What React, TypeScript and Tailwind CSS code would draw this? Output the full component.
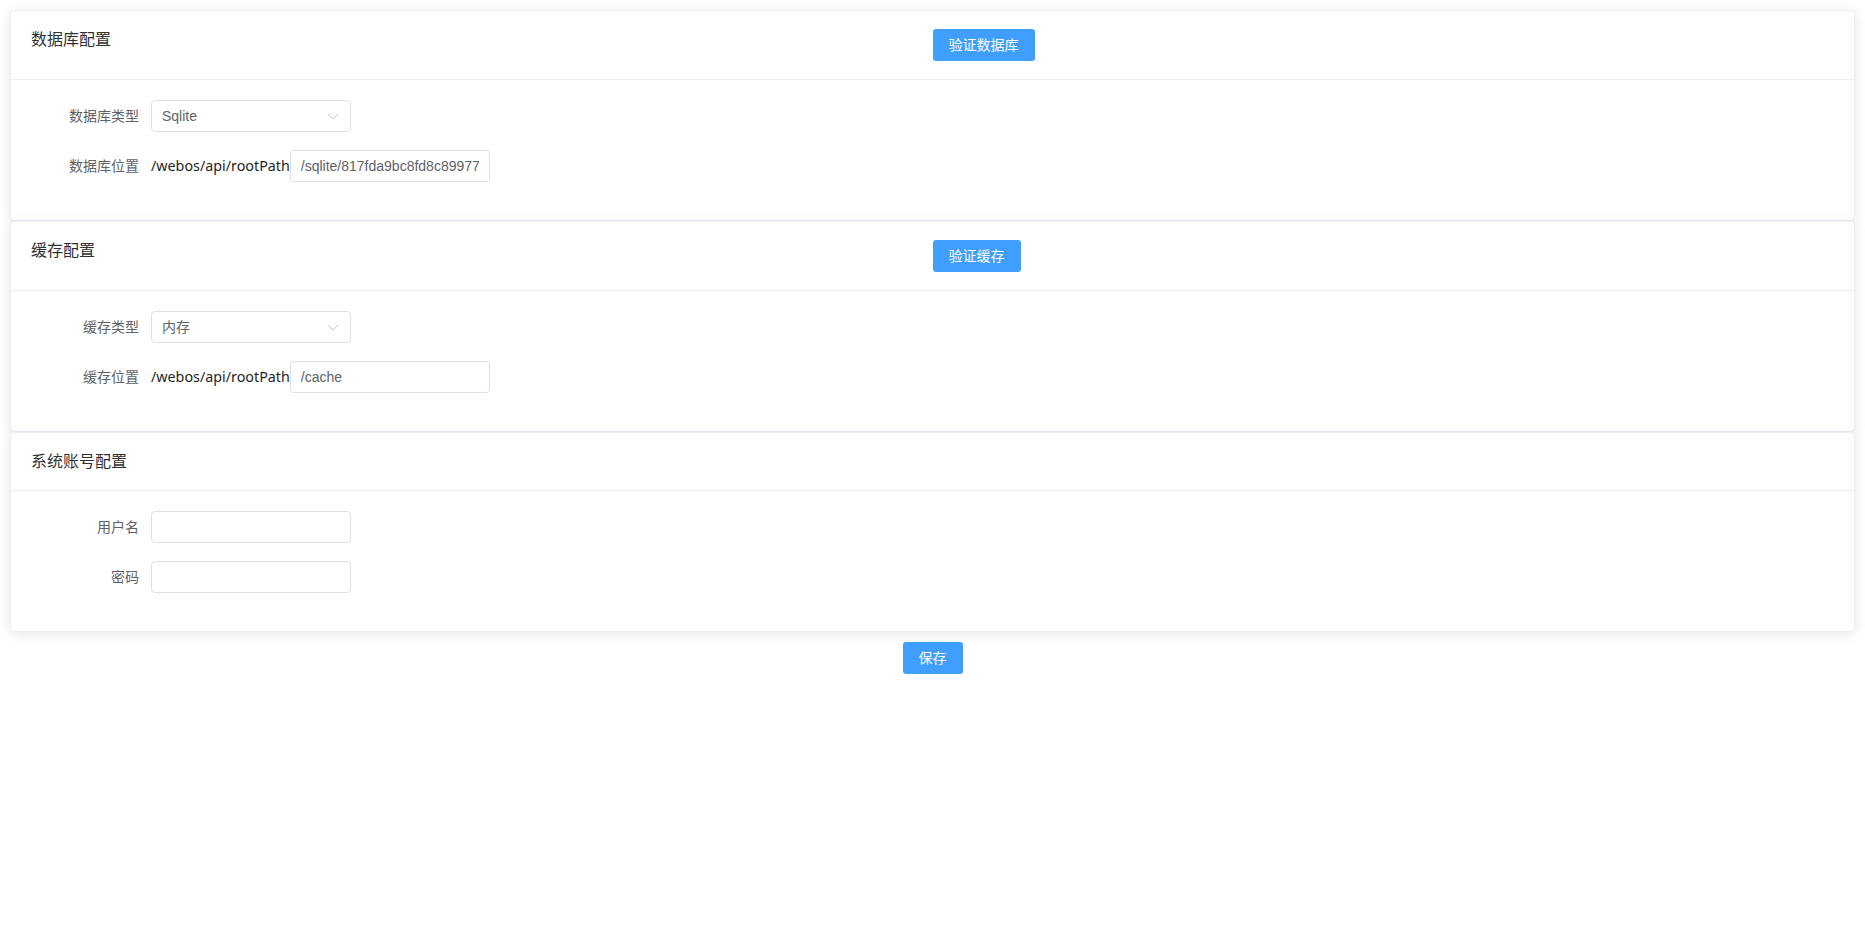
const font = "font-['Liberation_Sans','Noto_Sans_CJK_SC',sans-serif]";

function Chevron() {
  return (
    <svg width="12" height="7" viewBox="0 0 12 7" fill="none" className="shrink-0">
      <path d="M1 1l5 5 5-5" stroke="#c0c4cc" strokeWidth="1" />
    </svg>
  );
}

function Card({
  title,
  action,
  children,
}: {
  title: string;
  action?: string;
  children: React.ReactNode;
}) {
  return (
    <div className="rounded-[4px] border border-[#ebeef5] bg-white shadow-[0_2px_12px_0_rgba(0,0,0,0.1)]">
      <div className="grid grid-cols-2 items-start border-b border-[#ebeef5] px-5 py-[18px]">
        <div className="text-[16px] leading-[21px] text-[#303133]">{title}</div>
        {action && (
          <div>
            <button
              type="button"
              className="h-[32px] rounded-[3px] bg-[#409eff] px-[16px] text-[14px] leading-[32px] text-white"
            >
              {action}
            </button>
          </div>
        )}
      </div>
      <div className="flex flex-col gap-[18px] px-5 pt-5 pb-[38px]">{children}</div>
    </div>
  );
}

function Row({ label, children }: { label: string; children: React.ReactNode }) {
  return (
    <div className="flex h-[32px] items-center">
      <label className="w-[120px] shrink-0 pr-3 text-right text-[14px] text-[#606266]">{label}</label>
      {children}
    </div>
  );
}

function Select({ value }: { value: string }) {
  return (
    <div className="flex h-[32px] w-[200px] items-center justify-between rounded-[4px] border border-[#dcdfe6] pl-[10px] pr-[11px] text-[14px] text-[#606266]">
      <span>{value}</span>
      <Chevron />
    </div>
  );
}

function Input({ value = "" }: { value?: string }) {
  return (
    <input
      readOnly
      value={value}
      className="h-[32px] w-[200px] rounded-[4px] border border-[#dcdfe6] px-[10px] text-[14px] text-[#606266] outline-none"
    />
  );
}

function PathField({ value }: { value: string }) {
  return (
    <div className="flex items-center">
      <span className="font-['Noto_Sans',sans-serif] text-[14.3px] text-[#1f1f1f]">/webos/api/rootPath</span>
      <Input value={value} />
    </div>
  );
}

export default function App() {
  return (
    <div className={`${font} min-h-screen bg-white px-[10px] pt-[10px]`}>
      <Card title="数据库配置" action="验证数据库">
        <Row label="数据库类型">
          <Select value="Sqlite" />
        </Row>
        <Row label="数据库位置">
          <PathField value="/sqlite/817fda9bc8fd8c89977" />
        </Row>
      </Card>
      <Card title="缓存配置" action="验证缓存">
        <Row label="缓存类型">
          <Select value="内存" />
        </Row>
        <Row label="缓存位置">
          <PathField value="/cache" />
        </Row>
      </Card>
      <Card title="系统账号配置">
        <Row label="用户名">
          <Input />
        </Row>
        <Row label="密码">
          <Input />
        </Row>
      </Card>
      <div className="mt-[10px] flex justify-center">
        <button
          type="button"
          className="h-[32px] rounded-[3px] bg-[#409eff] px-[16px] text-[14px] leading-[32px] text-white"
        >
          保存
        </button>
      </div>
    </div>
  );
}
